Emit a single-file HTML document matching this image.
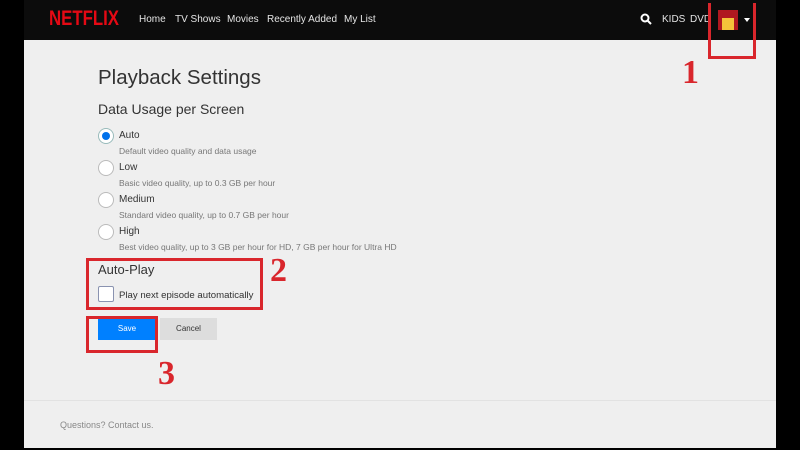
<!DOCTYPE html>
<html><head><meta charset="utf-8"><style>
*{margin:0;padding:0;box-sizing:border-box}
body{width:800px;height:450px;background:#000;position:relative;overflow:hidden;font-family:"Liberation Sans",sans-serif}
.a{position:absolute}
.c{left:24px;top:0;width:752px;height:448px;background:#efefef}
.h{left:24px;top:0;width:752px;height:40px;background:#0c0c0c}
.nav{color:#e5e5e5;font-size:10px;top:14px}
.radio{width:16px;height:16px;border-radius:50%;background:#fff;border:1px solid #bbb}
.lbl{font-size:10px;color:#333}
.sub{font-size:8.5px;color:#777}
.box{border:3px solid #d9262c}
.num{font-family:"Liberation Serif",serif;font-weight:bold;color:#d9262c;font-size:34px}
</style></head><body>
<div class="a c"></div>
<div class="a h"></div>
<div class="a" style="left:49px;top:7px;color:#e50914;font-weight:bold;font-size:21px;transform:scaleX(0.8);transform-origin:left">NETFLIX</div>
<div class="a nav" style="left:139px">Home</div>
<div class="a nav" style="left:175px">TV Shows</div>
<div class="a nav" style="left:227px">Movies</div>
<div class="a nav" style="left:267px">Recently Added</div>
<div class="a nav" style="left:344px">My List</div>
<svg class="a" style="left:640px;top:13px" width="12" height="12"><circle cx="5" cy="5" r="3.5" stroke="#fff" stroke-width="2" fill="none"/><line x1="7.5" y1="7.5" x2="11" y2="11" stroke="#fff" stroke-width="2"/></svg>
<div class="a nav" style="left:662px">KIDS</div>
<div class="a nav" style="left:690px">DVD</div>
<div class="a" style="left:718px;top:10px;width:20px;height:20px;background:#b01820"></div>
<div class="a" style="left:722px;top:18px;width:12px;height:12px;background:#f5c33a"></div>
<div class="a" style="left:744px;top:18px;width:0;height:0;border-left:3px solid transparent;border-right:3px solid transparent;border-top:4px solid #fff"></div>
<div class="a box" style="left:708px;top:3px;width:48px;height:56px;border-top:none"></div>
<div class="a num" style="left:682px;top:54px">1</div>

<div class="a" style="left:98px;top:66px;font-size:20.5px;color:#333">Playback Settings</div>
<div class="a" style="left:98px;top:101px;font-size:14px;color:#333">Data Usage per Screen</div>

<div class="a radio" style="left:98px;top:128px;border-color:#9bb"><div class="a" style="left:3px;top:3px;width:8px;height:8px;border-radius:50%;background:#0071eb"></div></div>
<div class="a lbl" style="left:119px;top:130px">Auto</div>
<div class="a sub" style="left:119px;top:146px">Default video quality and data usage</div>
<div class="a radio" style="left:98px;top:160px"></div>
<div class="a lbl" style="left:119px;top:162px">Low</div>
<div class="a sub" style="left:119px;top:178px">Basic video quality, up to 0.3 GB per hour</div>
<div class="a radio" style="left:98px;top:192px"></div>
<div class="a lbl" style="left:119px;top:194px">Medium</div>
<div class="a sub" style="left:119px;top:210px">Standard video quality, up to 0.7 GB per hour</div>
<div class="a radio" style="left:98px;top:224px"></div>
<div class="a lbl" style="left:119px;top:226px">High</div>
<div class="a sub" style="left:119px;top:242px">Best video quality, up to 3 GB per hour for HD, 7 GB per hour for Ultra HD</div>

<div class="a box" style="left:86px;top:258px;width:177px;height:52px"></div>
<div class="a" style="left:98px;top:262px;font-size:13px;color:#333">Auto-Play</div>
<div class="a" style="left:98px;top:286px;width:16px;height:16px;background:#fff;border:1px solid #8a93b0;border-radius:2px"></div>
<div class="a" style="left:119px;top:290px;font-size:9.6px;color:#333">Play next episode automatically</div>

<div class="a" style="left:98px;top:318px;width:58px;height:22px;background:#0080ff;color:#fff;font-size:8px;text-align:center;line-height:22px">Save</div>
<div class="a" style="left:160px;top:318px;width:57px;height:22px;background:#ddd;color:#333;font-size:8px;text-align:center;line-height:22px">Cancel</div>
<div class="a box" style="left:86px;top:316px;width:72px;height:37px"></div>
<div class="a num" style="left:158px;top:355px">3</div>
<div class="a num" style="left:270px;top:252px">2</div>

<div class="a" style="left:24px;top:400px;width:752px;height:1px;background:#e2e2e2"></div>
<div class="a" style="left:60px;top:420px;font-size:9px;color:#888">Questions? Contact us.</div>
</body></html>
